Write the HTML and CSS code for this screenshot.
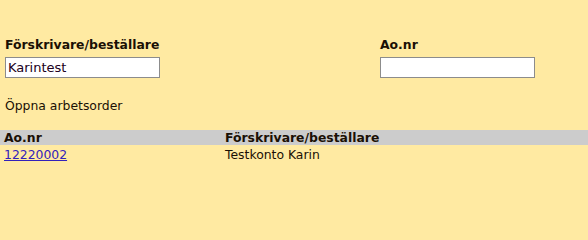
FILE: index.html
```html
<!DOCTYPE html>
<html lang="sv">
<head>
<meta charset="utf-8">
<title>Arbetsorder</title>
<link rel="stylesheet" href="styles.css">
</head>
<body>
<div class="page">
  <div class="search">
    <div class="field field-left">
      <label class="label" for="fb">Förskrivare/beställare</label>
      <input class="input" id="fb" type="text" value="Karintest">
    </div>
    <div class="field">
      <label class="label" for="ao">Ao.nr</label>
      <input class="input" id="ao" type="text" value="">
    </div>
  </div>
  <div class="section-title">Öppna arbetsorder</div>
  <table class="orders">
    <thead>
      <tr><th class="col-ao">Ao.nr</th><th>Förskrivare/beställare</th></tr>
    </thead>
    <tbody>
      <tr><td class="col-ao"><a href="#" class="link">12220002</a></td><td>Testkonto Karin</td></tr>
    </tbody>
  </table>
</div>
</body>
</html>
```
FILE: styles.css
```css
html, body {
  margin: 0;
  padding: 0;
  background: #ffeaa2;
}
body {
  font-family: "DejaVu Sans", sans-serif;
  font-size: 12.4px;
  color: #1a1005;
  width: 588px;
  height: 220px;
  overflow: hidden;
}
.page {
  padding-top: 37px;
}
.search {
  display: flex;
  padding-left: 5px;
}
.field {
  display: flex;
  flex-direction: column;
  align-items: flex-start;
}
.field-left {
  width: 375px;
}
.label {
  font-weight: bold;
  line-height: 16px;
  margin-bottom: 4px;
}
.input {
  box-sizing: border-box;
  width: 155px;
  height: 21px;
  margin: 0;
  padding: 1px 2px;
  border: 1px solid #8c8c8c;
  background: #fff;
  font-family: "DejaVu Sans", sans-serif;
  font-size: 13px;
  color: #200020;
}
.section-title {
  margin-top: 20px;
  padding-left: 5px;
  line-height: 16px;
}
.orders {
  margin-top: 16px;
  width: 100%;
  border-collapse: collapse;
}
.orders th, .orders td {
  text-align: left;
  padding: 0 4px;
  line-height: 15px;
}
.orders th {
  background: #cccccc;
  font-weight: bold;
}
.orders td {
  line-height: 17px;
  padding-top: 1px;
}
.orders .col-ao {
  width: 213px;
}
.link {
  color: #3322bb;
  text-decoration: underline;
}
```
